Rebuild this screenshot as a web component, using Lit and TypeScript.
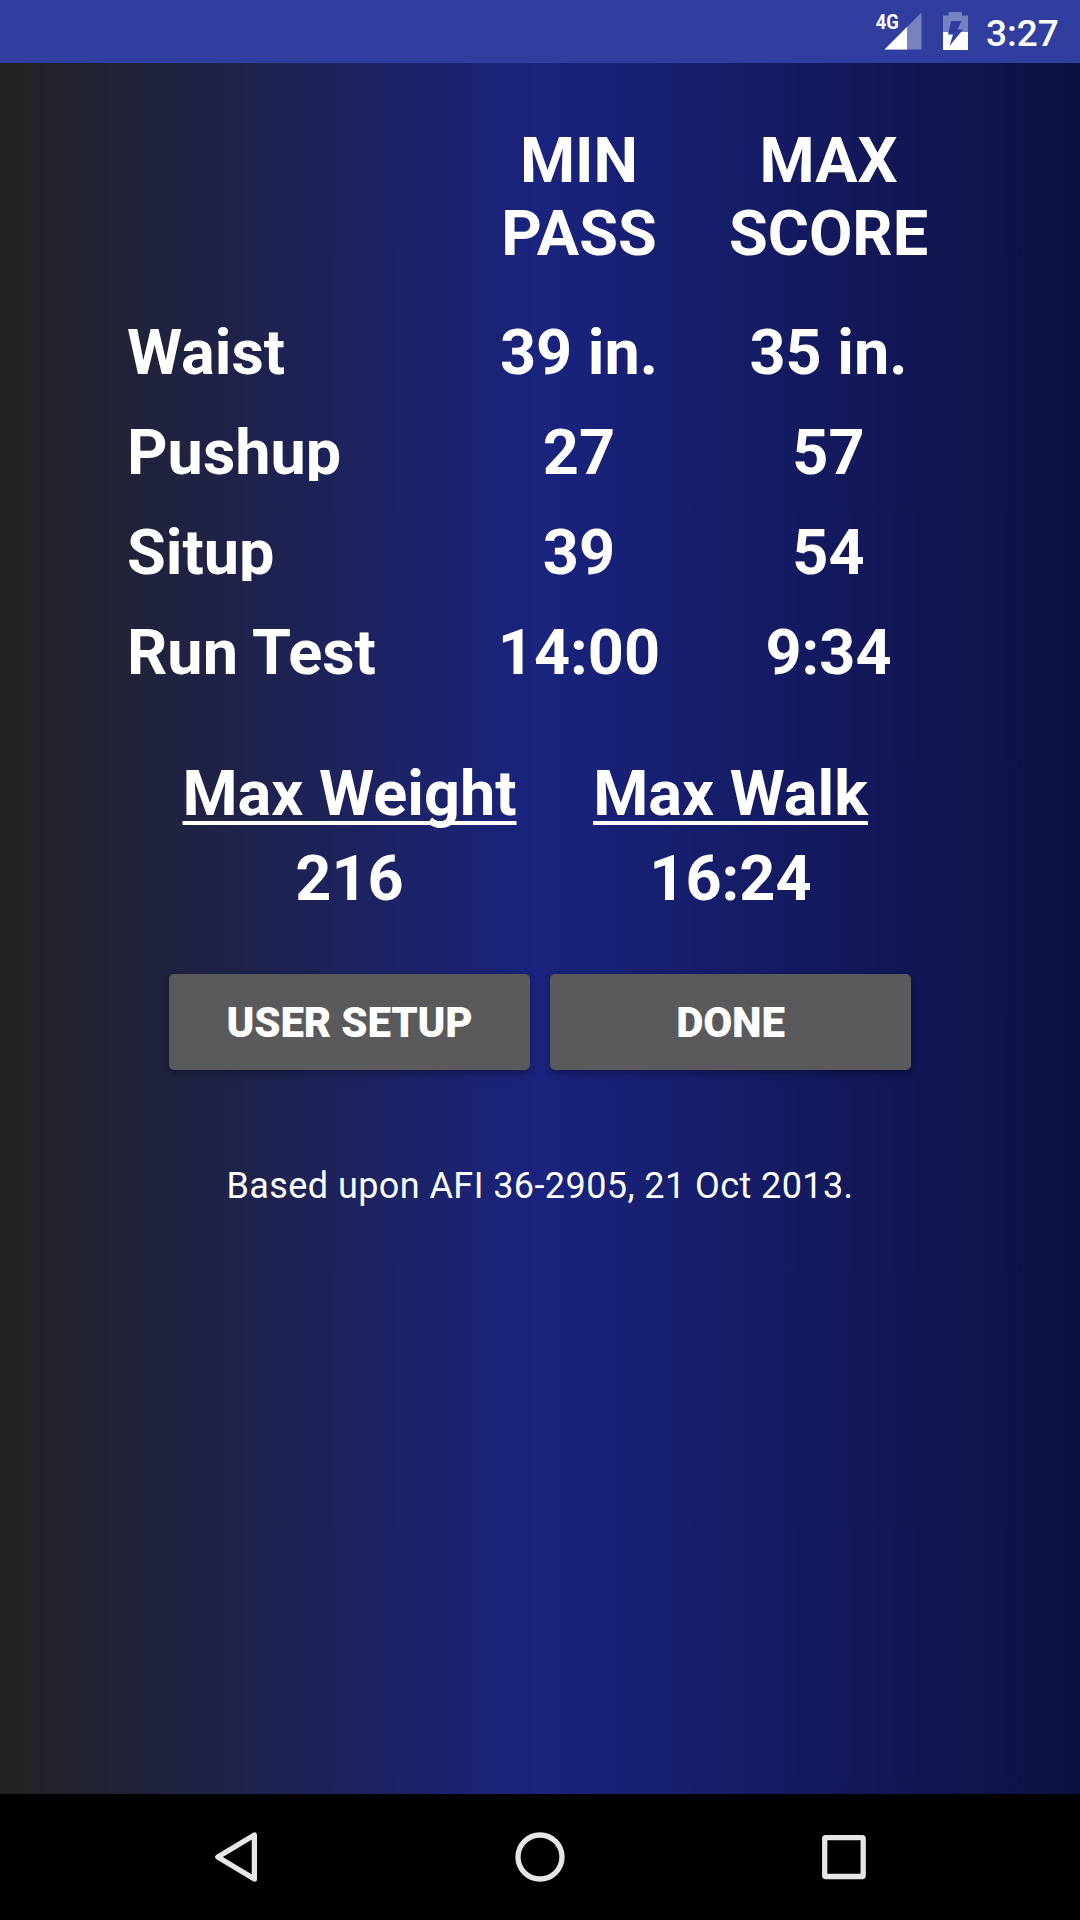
import { LitElement, html, css } from "lit";
import { customElement } from "lit/decorators.js";

interface ScoreRow {
  label: string;
  min: string;
  max: string;
}

const ROWS: ScoreRow[] = [
  { label: "Waist", min: "39 in.", max: "35 in." },
  { label: "Pushup", min: "27", max: "57" },
  { label: "Situp", min: "39", max: "54" },
  { label: "Run Test", min: "14:00", max: "9:34" },
];

@customElement("status-bar")
class StatusBar extends LitElement {
  static styles = css`
    :host {
      display: flex;
      justify-content: flex-end;
      height: 63px;
      background: #303f9f;
      color: #fff;
      font-family: Roboto, "Liberation Sans", sans-serif;
    }
    .icons {
      width: 110px;
      height: 63px;
      flex: none;
    }
    .net {
      font: 700 21px Roboto, "Liberation Sans", sans-serif;
      fill: #fff;
    }
    .time {
      width: 100px;
      padding: 12px 0 0 6px;
      box-sizing: border-box;
      font-size: 37px;
      font-weight: 500;
      line-height: 44px;
      white-space: nowrap;
    }
  `;
  render() {
    return html`
      <svg class="icons" viewBox="870 0 110 63">
        <text class="net" x="875.7" y="28.8" textLength="23" lengthAdjust="spacingAndGlyphs">4G</text>
        <path d="M921.5 12.5V49.5H884.5Z" fill="#fff" fill-opacity=".35" />
        <path d="M907 27V49.5H884.5Z" fill="#fff" />
        <path d="M943 15.5H948.5V12H962V15.5H968V32H943Z" fill="#fff" fill-opacity=".35" />
        <path d="M943 32H968V50H943Z" fill="#fff" />
        <path d="M951 21H961.5L957.5 29.5H963L949.5 46L953 34.5H948Z" fill="#303f9f" />
      </svg>
      <span class="time">3:27</span>
    `;
  }
}

@customElement("nav-bar")
class NavBar extends LitElement {
  static styles = css`
    :host {
      display: grid;
      grid-template-columns: 304px 304px 304px;
      justify-content: center;
      justify-items: center;
      align-items: center;
      height: 126px;
      background: #000;
    }
    .icon {
      width: 60px;
      height: 60px;
      fill: none;
      stroke: #e6e6e6;
      stroke-width: 5.3;
      stroke-linejoin: round;
    }
  `;
  render() {
    return html`
      <svg class="icon" viewBox="206 1827 60 60"><path d="M254.4 1835V1879L217.8 1857Z" /></svg>
      <svg class="icon" viewBox="510 1827 60 60"><circle cx="540" cy="1857" r="22" /></svg>
      <svg class="icon" viewBox="814 1827 60 60"><rect x="824.7" y="1837.7" width="38.5" height="38.8" rx="1" /></svg>
    `;
  }
}

@customElement("app-root")
class AppRoot extends LitElement {
  static styles = css`
    :host {
      display: flex;
      flex-direction: column;
      width: 1080px;
      height: 1920px;
      overflow: hidden;
      background: linear-gradient(90deg, #222222 0%, #1a237e 50%, #0d1140 100%);
      color: #fff;
      font-family: Roboto, "Liberation Sans", sans-serif;
      font-weight: 700;
      font-size: 63px;
      line-height: 73px;
    }
    .content {
      flex: 1;
      padding-top: 61px;
    }
    .heads,
    .row {
      display: grid;
      grid-template-columns: 327px 250px 249px;
      margin: 0 126px 0 127px;
      text-align: center;
      white-space: nowrap;
    }
    .heads {
      margin-bottom: 46px;
    }
    .min-head {
      grid-column: 2;
    }
    .row {
      margin-bottom: 27px;
    }
    .label {
      text-align: left;
      clip-path: inset(0 0 8px 0);
    }
    .limits,
    .actions {
      display: grid;
      grid-template-columns: 381px 381px;
      justify-content: center;
      text-align: center;
    }
    .limits {
      margin-top: 68px;
      row-gap: 12px;
    }
    .name {
      text-decoration: underline;
      text-decoration-thickness: 4px;
      text-underline-offset: 6px;
      text-decoration-skip-ink: none;
    }
    .actions {
      grid-template-columns: 361px 361px;
      column-gap: 20px;
      margin-top: 59px;
    }
    .btn {
      height: 96px;
      padding: 2px 0 0;
      border: 0;
      border-radius: 5px;
      background: #5a5a5c;
      color: #fff;
      font: 900 42px/94px Roboto, "Liberation Sans", sans-serif;
      letter-spacing: -0.15px;
      box-shadow: 0 3px 7px rgba(0, 0, 0, 0.35);
    }
    .note {
      margin: 95px 0 0;
      font-size: 36px;
      font-weight: 400;
      line-height: 42px;
      letter-spacing: 0.42px;
      text-align: center;
    }
  `;
  render() {
    return html`
      <status-bar></status-bar>
      <main class="content">
        <div class="heads">
          <div class="min-head">MIN<br />PASS</div>
          <div>MAX<br />SCORE</div>
        </div>
        ${ROWS.map(
          (r) => html`<div class="row">
            <div class="label">${r.label}</div>
            <div>${r.min}</div>
            <div>${r.max}</div>
          </div>`
        )}
        <div class="limits">
          <div class="name">Max Weight</div>
          <div class="name">Max Walk</div>
          <div>216</div>
          <div>16:24</div>
        </div>
        <div class="actions">
          <button class="btn">USER SETUP</button>
          <button class="btn">DONE</button>
        </div>
        <p class="note">Based upon AFI 36-2905, 21 Oct 2013.</p>
      </main>
      <nav-bar></nav-bar>
    `;
  }
}
